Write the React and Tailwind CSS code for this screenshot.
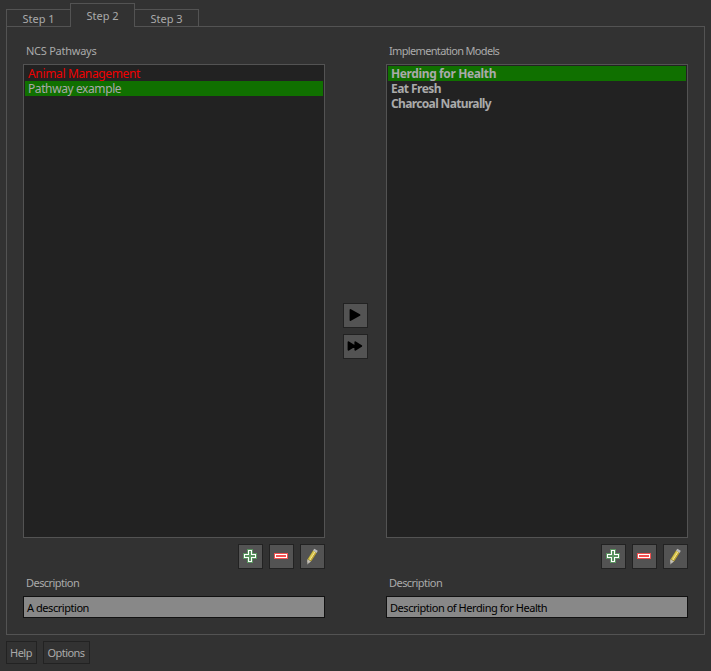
import React from "react";

function Label({ children, className = "" }) {
  return <span className={`block whitespace-nowrap ${className}`}>{children}</span>;
}

function ToolButton({ label, children }) {
  return (
    <button
      aria-label={label}
      className="flex h-[25px] w-[25px] items-center justify-center border border-[#222222] bg-[#535353]"
    >
      {children}
    </button>
  );
}

function PlusIcon() {
  return (
    <svg className="mr-px mb-px" width="14" height="14" viewBox="0 0 14 14" shapeRendering="crispEdges">
      <path d="M4 0h6v4h4v6h-4v4H4v-4H0V4h4z" fill="#5a9560" />
      <path d="M5 1h4v4h4v4H9v4H5V9H1V5h4z" fill="#fff" />
      <path d="M6 2h2v4h4v2H8v4H6V8H2V6h4z" fill="#5a9560" />
    </svg>
  );
}

function MinusIcon() {
  return (
    <svg className="mr-px mb-px" width="14" height="6" viewBox="0 0 14 6" shapeRendering="crispEdges">
      <path d="M0 0h14v6H0z" fill="#f05050" />
      <path d="M1 1h12v4H1z" fill="#fff" />
      <path d="M2 2h10v2H2z" fill="#f05050" />
    </svg>
  );
}

function PencilIcon() {
  return (
    <svg className="mr-px mb-px" width="14" height="17" viewBox="0 0 14 17">
      <path d="M2 15.8l.4-4.6L8 2.3l3.8 2.2L6 13.4z" fill="#8f8430" />
      <path d="M3.1 11L8.3 2.8l1.7 1-5.2 8.3z" fill="#d8c750" />
      <path d="M4.6 11.8l5-8 .9.5-5 8z" fill="#fff09a" />
      <path d="M5.4 12.3l5-8 1 .7-5.1 8z" fill="#c0a535" />
      <path d="M8 2.6L9.4.8l3.3 2-.9 2.2z" fill="#bcbcbc" />
      <path d="M2.4 11.2L6 13.4l-4 3z" fill="#c4c0b8" />
      <path d="M2.1 14.2l1.5.9L2 16.3z" fill="#888" />
    </svg>
  );
}

function Triangle() {
  return (
    <svg className="mb-px" width="15" height="14" viewBox="0 0 15 14">
      <path d="M2.5 2L11.5 7 2.5 12z" stroke="#000" strokeWidth="1.8" strokeLinejoin="round" />
    </svg>
  );
}

function DoubleTriangle() {
  return (
    <svg className="mr-px mb-px" width="16" height="14" viewBox="0 0 16 14">
      <path
        d="M1.5 3.2L7.5 7 1.5 10.8zM8.3 3.2L14.3 7 8.3 10.8z"
        stroke="#000"
        strokeWidth="1.8"
        strokeLinejoin="round"
      />
    </svg>
  );
}

function Column({ title, titleClass, items, description, descriptionClass }) {
  return (
    <section className="flex w-[302px] flex-col">
      <div className="flex h-[15px] items-center pl-[3px]">
        <Label className={titleClass}>{title}</Label>
      </div>
      <ul className="mt-[6px] h-[474px] border border-[#535353] bg-[#222222] p-px text-[12px]">
        {items.map((item) => (
          <li key={item.text} className={`flex h-[15px] items-center pl-[3px] ${item.row}`}>
            <Label className={item.label}>{item.text}</Label>
          </li>
        ))}
      </ul>
      <div className="mt-[6px] flex justify-end gap-[6px]">
        <ToolButton label="Add"><PlusIcon /></ToolButton>
        <ToolButton label="Remove"><MinusIcon /></ToolButton>
        <ToolButton label="Edit"><PencilIcon /></ToolButton>
      </div>
      <div className="mt-[6px] flex h-[15px] items-center pl-[3px]">
        <Label className="tracking-[-0.55px]">Description</Label>
      </div>
      <div className="mt-[6px] flex h-[22px] items-center border border-[#111111] bg-[#888888] pt-px pl-[3px] text-black">
        <Label className={descriptionClass}>{description}</Label>
      </div>
    </section>
  );
}

const pathways = [
  { text: "Animal Management", row: "text-[#f00000]", label: "tracking-[-0.35px]" },
  { text: "Pathway example", row: "bg-[#107000]", label: "tracking-[-0.4px]" },
];

const models = [
  { text: "Herding for Health", row: "bg-[#107000] font-bold", label: "tracking-[-0.38px]" },
  { text: "Eat Fresh", row: "font-bold", label: "tracking-[-0.55px]" },
  { text: "Charcoal Naturally", row: "font-bold", label: "tracking-[-0.65px]" },
];

export default function App() {
  return (
    <main className="flex h-[671px] w-[711px] flex-col bg-[#323232] px-[6px] pt-[3px] font-['Noto_Sans',sans-serif] text-[11px] leading-[15px] text-[#aaaaaa]">
      <nav className="z-10 flex h-6 items-end">
        <div className="mb-px flex h-[17px] w-[64px] items-center justify-center border-t border-l border-[#535353]">
          <Label>Step 1</Label>
        </div>
        <div className="flex h-6 w-[65px] items-center justify-center border border-b-0 border-[#535353] bg-[#323232] pb-px">
          <Label>Step 2</Label>
        </div>
        <div className="mb-px flex h-[17px] w-[64px] items-center justify-center border-t border-r border-[#535353]">
          <Label>Step 3</Label>
        </div>
      </nav>
      <div className="-mt-px flex h-[609px] w-[699px] border border-[#535353] pt-[16px] pl-[16px]">
        <Column
          title="NCS Pathways"
          titleClass="tracking-[-0.25px]"
          items={pathways}
          description="A description"
          descriptionClass="tracking-[-0.45px]"
        />
        <div className="flex w-[61px] flex-col items-center gap-[6px] pt-[260px]">
          <ToolButton label="Move selected"><Triangle /></ToolButton>
          <ToolButton label="Move all"><DoubleTriangle /></ToolButton>
        </div>
        <Column
          title="Implementation Models"
          titleClass="tracking-[-0.66px]"
          items={models}
          description="Description of Herding for Health"
          descriptionClass="tracking-[-0.45px]"
        />
      </div>
      <footer className="mt-[6px] flex gap-[6px]">
        <button className="flex h-[23px] w-[31px] items-center justify-center border border-[#222222] pr-px">
          <Label className="tracking-[-0.5px]">Help</Label>
        </button>
        <button className="flex h-[23px] w-[47px] items-center justify-center border border-[#222222] pr-px">
          <Label className="tracking-[-0.55px]">Options</Label>
        </button>
      </footer>
    </main>
  );
}
